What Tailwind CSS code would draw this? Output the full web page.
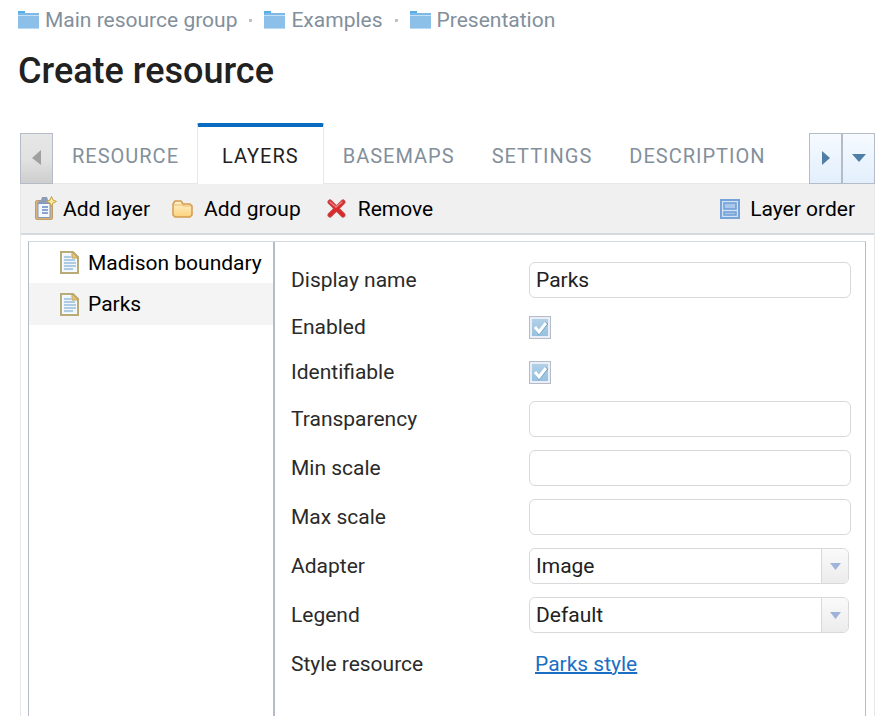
<!DOCTYPE html>
<html lang="en">
<head>
<meta charset="utf-8">
<meta name="viewport" content="width=device-width, initial-scale=1">
<title>Create resource</title>
<script src="https://cdn.jsdelivr.net/npm/@tailwindcss/browser@4"></script>
</head>
<body class="bg-white font-['Roboto',sans-serif] text-[21px] leading-6 text-black">
<svg class="hidden" aria-hidden="true">
  <symbol id="folder" viewBox="0 0 21 18">
    <path d="M0 0h7v2h14v3H0z" fill="#5aaee6"/>
    <path d="M1 2h20v2H0z" fill="#7db9e6"/>
    <path d="M0 4h21v14H0z" fill="#8dc0e8"/>
    <path d="M0 4h21v1H0z" fill="#c3e0f6"/>
    <path d="M0 17h21v1H0z" fill="#b9daf2"/>
  </symbol>
  <symbol id="page" viewBox="0 0 19 23">
    <path d="M1 1h12l5 5v16H1z" fill="#f6fbff" stroke="#b8ab78" stroke-width="2"/>
    <path d="M3 3h9v4h4v13H3z" fill="#eef6fb"/>
    <path d="M12 1l6 6h-6z" fill="#e8c577" stroke="#c5a45c"/>
    <path d="M4 6h7M4 9h11M4 12h12M4 15h12M4 18h9" stroke="#aecbe2" stroke-width="2"/>
  </symbol>
</svg>
<div class="flex min-h-screen flex-col">
  <header class="px-[18px] pt-2">
    <nav aria-label="Breadcrumb">
      <ol class="flex items-center text-[#838f9b]">
        <li><a href="#" class="flex items-center gap-[6px]"><svg class="h-[18px] w-[21px]"><use href="#folder"/></svg>Main resource group</a></li>
        <li aria-hidden="true" class="mx-3 size-[3px] bg-[#bcc2c6]"></li>
        <li><a href="#" class="flex items-center gap-[6px]"><svg class="h-[18px] w-[21px]"><use href="#folder"/></svg>Examples</a></li>
        <li aria-hidden="true" class="mx-3 size-[3px] bg-[#bcc2c6]"></li>
        <li><a href="#" class="flex items-center gap-[6px]"><svg class="h-[18px] w-[21px]"><use href="#folder"/></svg>Presentation</a></li>
      </ol>
    </nav>
    <h1 class="mt-[18px] text-[36px] leading-[42px] font-medium text-[#212121]">Create resource</h1>
  </header>

  <main class="mt-[31px] mr-[17px] ml-5 flex grow flex-col">
    <div class="flex items-end">
      <button aria-label="Scroll tabs left" class="flex h-[51px] w-[33px] items-center justify-center border border-[#b5bcc8] bg-linear-to-b from-[#e6e6e6] via-[#e2e2e2] to-[#cecece] pb-[2px]">
        <svg class="h-[15px] w-[9px]" viewBox="0 0 9 15"><path d="M9 0v15L0 8z" fill="#a0a0a0"/></svg>
      </button>
      <div role="tablist" class="flex min-w-0 grow items-end text-[20px] tracking-[1px] text-[#838f9b]">
        <button role="tab" class="h-[61px] border-b border-[#e8e8e8] pt-[6px] pr-[18px] pl-[19px]">RESOURCE</button>
        <button role="tab" aria-selected="true" class="h-[61px] rounded-t-[2px] border-x border-t-4 border-x-[#e6e8ea] border-t-[#0a6cc0] px-6 text-[#1f1f1f]">LAYERS</button>
        <button role="tab" class="h-[61px] border-b border-[#e8e8e8] pt-[6px] pr-[18px] pl-[19px]">BASEMAPS</button>
        <button role="tab" class="h-[61px] border-b border-[#e8e8e8] pt-[6px] pr-[18px] pl-[19px]">SETTINGS</button>
        <button role="tab" class="h-[61px] border-b border-[#e8e8e8] pt-[6px] pr-[18px] pl-[19px]">DESCRIPTION</button>
        <span class="h-px grow bg-[#e8e8e8]"></span>
      </div>
      <button aria-label="Scroll tabs right" class="flex h-[51px] w-[33px] items-center justify-center border border-[#b5bcc8] bg-linear-to-b from-[#f6faff] to-[#e2effc] pb-[2px]">
        <svg class="h-[14px] w-2" viewBox="0 0 8 14"><path d="M0 0v14L8 7z" fill="#4f7ea6"/></svg>
      </button>
      <button aria-label="List of tabs" class="flex h-[51px] w-[33px] items-center justify-center border border-[#b5bcc8] bg-linear-to-b from-[#f6faff] to-[#e2effc] pb-[2px]">
        <svg class="h-2 w-[14px]" viewBox="0 0 14 8"><path d="M0 0h14L7 8z" fill="#4f7ea6"/></svg>
      </button>
    </div>

    <section class="flex grow flex-col border-x border-[#e8e8e8]">
      <div role="toolbar" class="flex h-[51px] items-center border-b-2 border-[#d3d9de] bg-[#f0f0f0] pr-[19px] pl-[13px]">
        <button class="flex items-center gap-[6px]">
          <svg class="h-[25px] w-[23px]" viewBox="0 0 23 25">
            <rect x="1.5" y="4.500" width="17" height="19" rx="1.500" fill="#d6b27c" stroke="#c39c68"/>
            <rect x="3.500" y="6" width="13" height="16" fill="#8299bd"/>
            <rect x="4.500" y="8" width="11" height="13" fill="#f4f8fe"/>
            <path d="M5 7V4h2l1-3h5l1 3h2v3z" fill="#8d9db8"/>
            <path d="M8 11h6M8 14h6M8 17h6" stroke="#8aa5d0" stroke-width="2"/>
            <path d="M17.500 0.500l1.500 3.500 3.500 1.500-3.500 1.500-1.500 3.500-1.500-3.500-3.500-1.500 3.500-1.500z" fill="#f7e99a" stroke="#c4a345"/>
          </svg>Add layer
        </button>
        <button class="ml-[22px] flex items-center gap-[11px]">
          <svg class="h-[18px] w-[21px]" viewBox="0 0 21 18">
            <defs><linearGradient id="fold" x2="0" y2="1"><stop stop-color="#fff3cf"/><stop offset="1" stop-color="#fbd27c"/></linearGradient></defs>
            <path d="M1 15V4l2-3h6l2 3h7l2 2v9l-2 2H3z" fill="url(#fold)" stroke="#d59a4e" stroke-width="1.500" stroke-linejoin="round"/>
            <path d="M2 5h8l2 1h7" fill="none" stroke="#e9bd73"/>
          </svg>Add group
        </button>
        <button class="ml-[26px] flex items-center gap-3">
          <svg class="size-[19px]" viewBox="0 0 19 19" stroke-linecap="round" fill="none"><path d="M3 3l13 13M16 3L3 16" stroke="#b95555" stroke-width="5"/><path d="M3 3l13 13M16 3L3 16" stroke="#dc2a2c" stroke-width="3.500"/><path d="M3 3l6 5 6-5" stroke="#ea8080" stroke-width="1.500"/></svg>Remove
        </button>
        <button class="ml-auto flex items-center gap-[10px]">
          <svg class="size-5" viewBox="0 0 20 20" fill="none"><rect x="1" y="1" width="18" height="18" fill="#d2e3f5" stroke="#76a4d9" stroke-width="2"/><rect x="4" y="4" width="12" height="6" fill="#a9c8ec" stroke="#6f9dd4" stroke-width="1.500"/><rect x="4" y="13" width="12" height="3" fill="#a9c8ec" stroke="#6f9dd4" stroke-width="1.500"/></svg>Layer order
        </button>
      </div>

      <div class="mt-[6px] mr-2 ml-[7px] flex grow border border-b-0 border-[#b5bcc8] border-t-[#d3d9de]">
        <ul role="tree" class="w-[244px] shrink-0">
          <li role="treeitem" class="flex h-[41px] items-center gap-[9px] pl-[31px] whitespace-nowrap"><svg class="h-[23px] w-[19px] shrink-0"><use href="#page"/></svg>Madison boundary</li>
          <li role="treeitem" aria-selected="true" class="flex h-[42px] items-center gap-[9px] bg-[#f4f4f4] pl-[31px]"><svg class="h-[23px] w-[19px]"><use href="#page"/></svg>Parks</li>
        </ul>
        <form class="grid grow auto-rows-min grid-cols-[238px_1fr] items-center gap-y-[13px] border-l-2 border-[#b5bcc8] pt-5 pr-[14px] pl-4 text-[#2a2a2a]">
          <label for="name">Display name</label>
          <input id="name" value="Parks" class="h-9 w-full min-w-0 rounded-md border border-[#d9d9d9] px-[6px] text-[#212121]">
          <label for="enabled">Enabled</label>
          <span class="flex h-8 items-center"><span class="relative flex h-[23px] w-[22px]"><input id="enabled" type="checkbox" checked class="peer h-[23px] w-[22px] appearance-none border border-[#b5bcc8] bg-linear-to-b from-[#b4d2e8] to-[#93c0de] shadow-[inset_0_0_0_2px_#e9eef7]"><svg class="pointer-events-none absolute inset-0 hidden peer-checked:block" viewBox="0 0 22 23" fill="none"><path d="M7 12l3 5 8-10" stroke="#5f93bb" stroke-width="3"/><path d="M6 11l4 5 7-9" stroke="#fff" stroke-width="3"/></svg></span></span>
          <label for="ident">Identifiable</label>
          <span class="flex h-8 items-center"><span class="relative flex h-[23px] w-[22px]"><input id="ident" type="checkbox" checked class="peer h-[23px] w-[22px] appearance-none border border-[#b5bcc8] bg-linear-to-b from-[#b4d2e8] to-[#93c0de] shadow-[inset_0_0_0_2px_#e9eef7]"><svg class="pointer-events-none absolute inset-0 hidden peer-checked:block" viewBox="0 0 22 23" fill="none"><path d="M7 12l3 5 8-10" stroke="#5f93bb" stroke-width="3"/><path d="M6 11l4 5 7-9" stroke="#fff" stroke-width="3"/></svg></span></span>
          <label for="transp">Transparency</label>
          <input id="transp" class="h-9 w-full min-w-0 rounded-md border border-[#d9d9d9] px-[6px]">
          <label for="min">Min scale</label>
          <input id="min" class="h-9 w-full min-w-0 rounded-md border border-[#d9d9d9] px-[6px]">
          <label for="max">Max scale</label>
          <input id="max" class="h-9 w-full min-w-0 rounded-md border border-[#d9d9d9] px-[6px]">
          <label for="adapter">Adapter</label>
          <div class="relative mr-[2px]">
            <select id="adapter" class="block h-9 w-full appearance-none rounded-md border border-[#d9d9d9] px-[6px] text-[#212121]"><option>Image</option></select>
            <span class="pointer-events-none absolute inset-y-px right-px flex w-[27px] items-center justify-center rounded-r-[5px] border-l border-[#d9d9d9] bg-linear-to-b from-[#fafafa] to-[#ececec]"><svg class="h-[7px] w-[11px]" viewBox="0 0 11 7"><path d="M0 0h11L5.500 7z" fill="#9fb4d8"/></svg></span>
          </div>
          <label for="legend">Legend</label>
          <div class="relative mr-[2px]">
            <select id="legend" class="block h-9 w-full appearance-none rounded-md border border-[#d9d9d9] px-[6px] text-[#212121]"><option>Default</option></select>
            <span class="pointer-events-none absolute inset-y-px right-px flex w-[27px] items-center justify-center rounded-r-[5px] border-l border-[#d9d9d9] bg-linear-to-b from-[#fafafa] to-[#ececec]"><svg class="h-[7px] w-[11px]" viewBox="0 0 11 7"><path d="M0 0h11L5.500 7z" fill="#9fb4d8"/></svg></span>
          </div>
          <span>Style resource</span>
          <span class="flex h-9 items-center"><a href="#" class="ml-[6px] text-[#1a6fc4] underline decoration-2">Parks style</a></span>
        </form>
      </div>
    </section>
  </main>
</div>
</body>
</html>
